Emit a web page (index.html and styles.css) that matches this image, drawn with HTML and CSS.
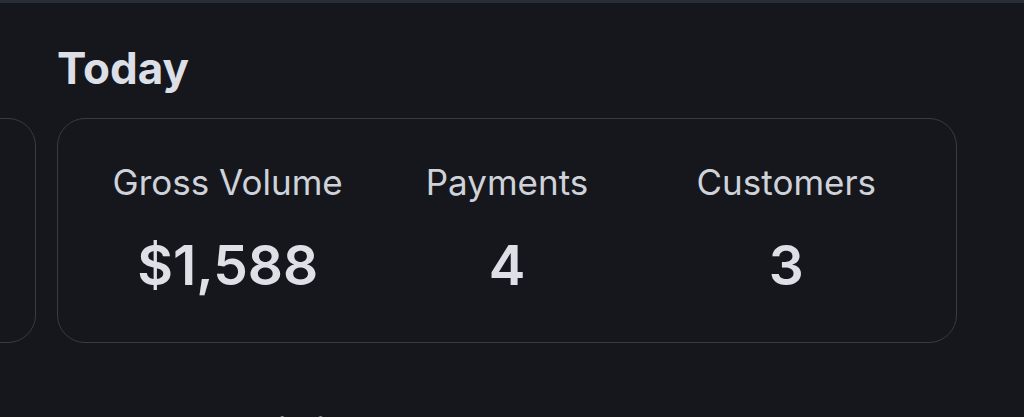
FILE: index.html
```html
<!DOCTYPE html>
<html lang="en">
<head>
	<meta charset="UTF-8">
	<title>Today</title>
	<link rel="stylesheet" href="styles.css">
</head>
<body>
	<div class="top-strip"></div>

	<!-- Today section -->
	<h2 class="section-title">Today</h2>
	<div class="card-row">
		<div class="stat-card stat-card--prev"></div>
		<div class="stat-card">
			<div class="stat">
				<div class="stat-label">Gross Volume</div>
				<div class="stat-value">$1,588</div>
			</div>
			<div class="stat">
				<div class="stat-label">Payments</div>
				<div class="stat-value">4</div>
			</div>
			<div class="stat">
				<div class="stat-label">Customers</div>
				<div class="stat-value">3</div>
			</div>
		</div>
	</div>

	<!-- Next section, cut off by the window -->
	<h2 class="section-title section-title--next">Recent activity</h2>
</body>
</html>
```

FILE: styles.css
```css
/* Global */
body {
	margin: 0;
	height: 100vh;
	overflow: hidden;
	background-color: #15171d;
	color: #dfe2e8;
	font-family: Inter, "Liberation Sans", sans-serif;
}

.top-strip {
	height: 3px;
	background-color: #292d35;
}

/* Section headings */
.section-title {
	margin: 0;
	padding: 40px 0 0 57px;
	font-size: 44px;
	line-height: 50px;
	font-weight: 700;
	color: #dcdfe6;
}

.section-title--next {
	padding-top: 66px;
	padding-left: 48px;
}

/* Cards */
.card-row {
	display: flex;
	gap: 21px;
	margin-top: 25px;
}

.stat-card {
	flex: 0 0 auto;
	width: 900px;
	height: 225px;
	box-sizing: border-box;
	border: 1.5px solid #383b42;
	border-radius: 28px;
	padding: 0 30px;
	display: flex;
}

.stat-card--prev {
	margin-left: -864px;
}

.stat {
	flex: 1;
	display: flex;
	flex-direction: column;
	align-items: center;
	padding-top: 42px;
}

.stat-label {
	font-size: 35px;
	line-height: 42px;
	font-weight: 400;
	color: #cfd2d9;
}

.stat-value {
	margin-top: 32px;
	font-size: 55px;
	line-height: 60px;
	font-weight: 600;
	color: #dde0e7;
}
```
